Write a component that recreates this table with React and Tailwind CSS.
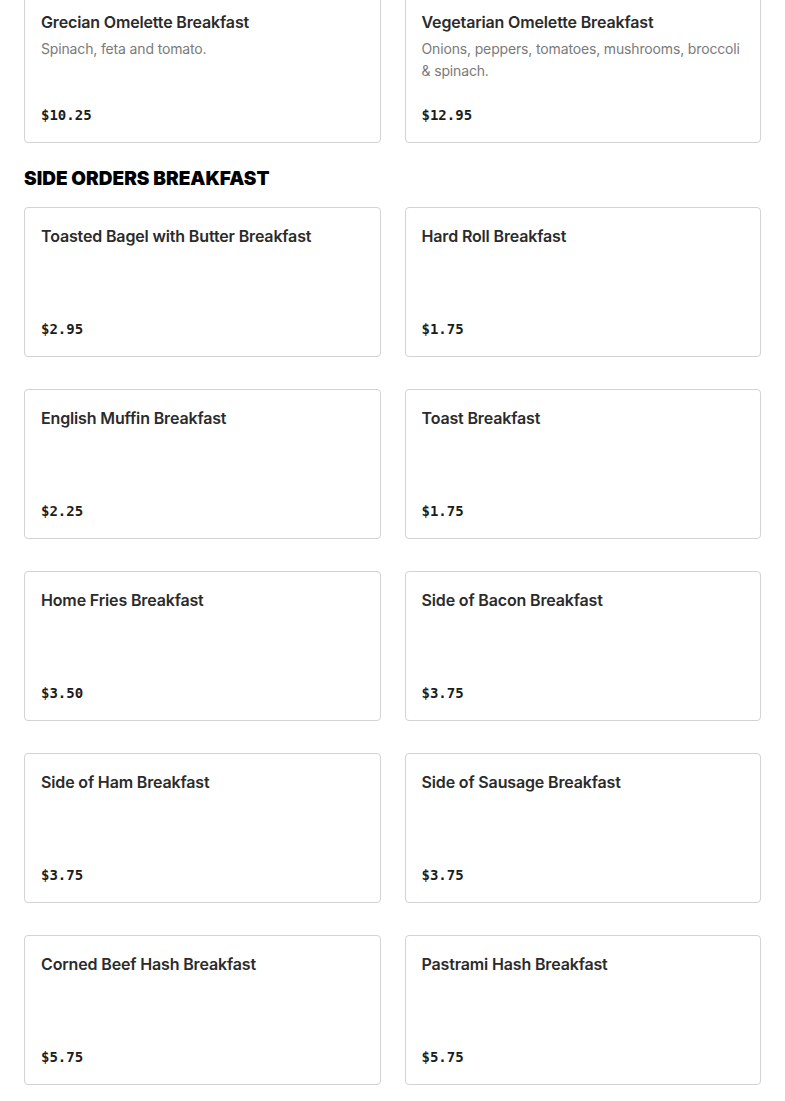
export default function App() {
  const top = [
    { t: "Grecian Omelette Breakfast", d: "Spinach, feta and tomato.", p: "$10.25" },
    { t: "Vegetarian Omelette Breakfast", d: "Onions, peppers, tomatoes, mushrooms, broccoli & spinach.", p: "$12.95" },
  ];
  const sides = [
    { t: "Toasted Bagel with Butter Breakfast", p: "$2.95" },
    { t: "Hard Roll Breakfast", p: "$1.75" },
    { t: "English Muffin Breakfast", p: "$2.25" },
    { t: "Toast Breakfast", p: "$1.75" },
    { t: "Home Fries Breakfast", p: "$3.50" },
    { t: "Side of Bacon Breakfast", p: "$3.75" },
    { t: "Side of Ham Breakfast", p: "$3.75" },
    { t: "Side of Sausage Breakfast", p: "$3.75" },
    { t: "Corned Beef Hash Breakfast", p: "$5.75" },
    { t: "Pastrami Hash Breakfast", p: "$5.75" },
  ];
  const Card = ({ t, d, p }) => (
    <div className="h-[150px] rounded border border-[#d3d3d3] bg-white px-4 pt-4 pb-[15px] flex flex-col justify-between">
      <div>
        <div className="text-[16px] leading-6 font-semibold text-[#2b2b2b] tracking-[-0.15px]" style={{ fontFamily: "Inter, sans-serif" }}>{t}</div>
        {d && <div className="mt-1 text-[14px] leading-[22px] text-[#7a7a7a] tracking-[-0.15px]" style={{ fontFamily: "Inter, sans-serif" }}>{d}</div>}
      </div>
      <div className="text-[14px] leading-6 font-bold text-[#1c1c1c]" style={{ fontFamily: "'DejaVu Sans Mono', monospace" }}>{p}</div>
    </div>
  );
  return (
    <div className="bg-white min-h-[1101px] px-6 overflow-hidden">
      <div className="-mt-[7px] grid grid-cols-2 gap-6">
        {top.map((c) => <Card key={c.t} {...c} />)}
      </div>
      <h2 className="mt-[22px] mb-[14px] text-[19px] leading-7 font-black text-black tracking-normal" style={{ fontFamily: "Inter, sans-serif" }}>SIDE ORDERS BREAKFAST</h2>
      <div className="grid grid-cols-2 gap-x-6 gap-y-8">
        {sides.map((c) => <Card key={c.t} {...c} />)}
      </div>
    </div>
  );
}
